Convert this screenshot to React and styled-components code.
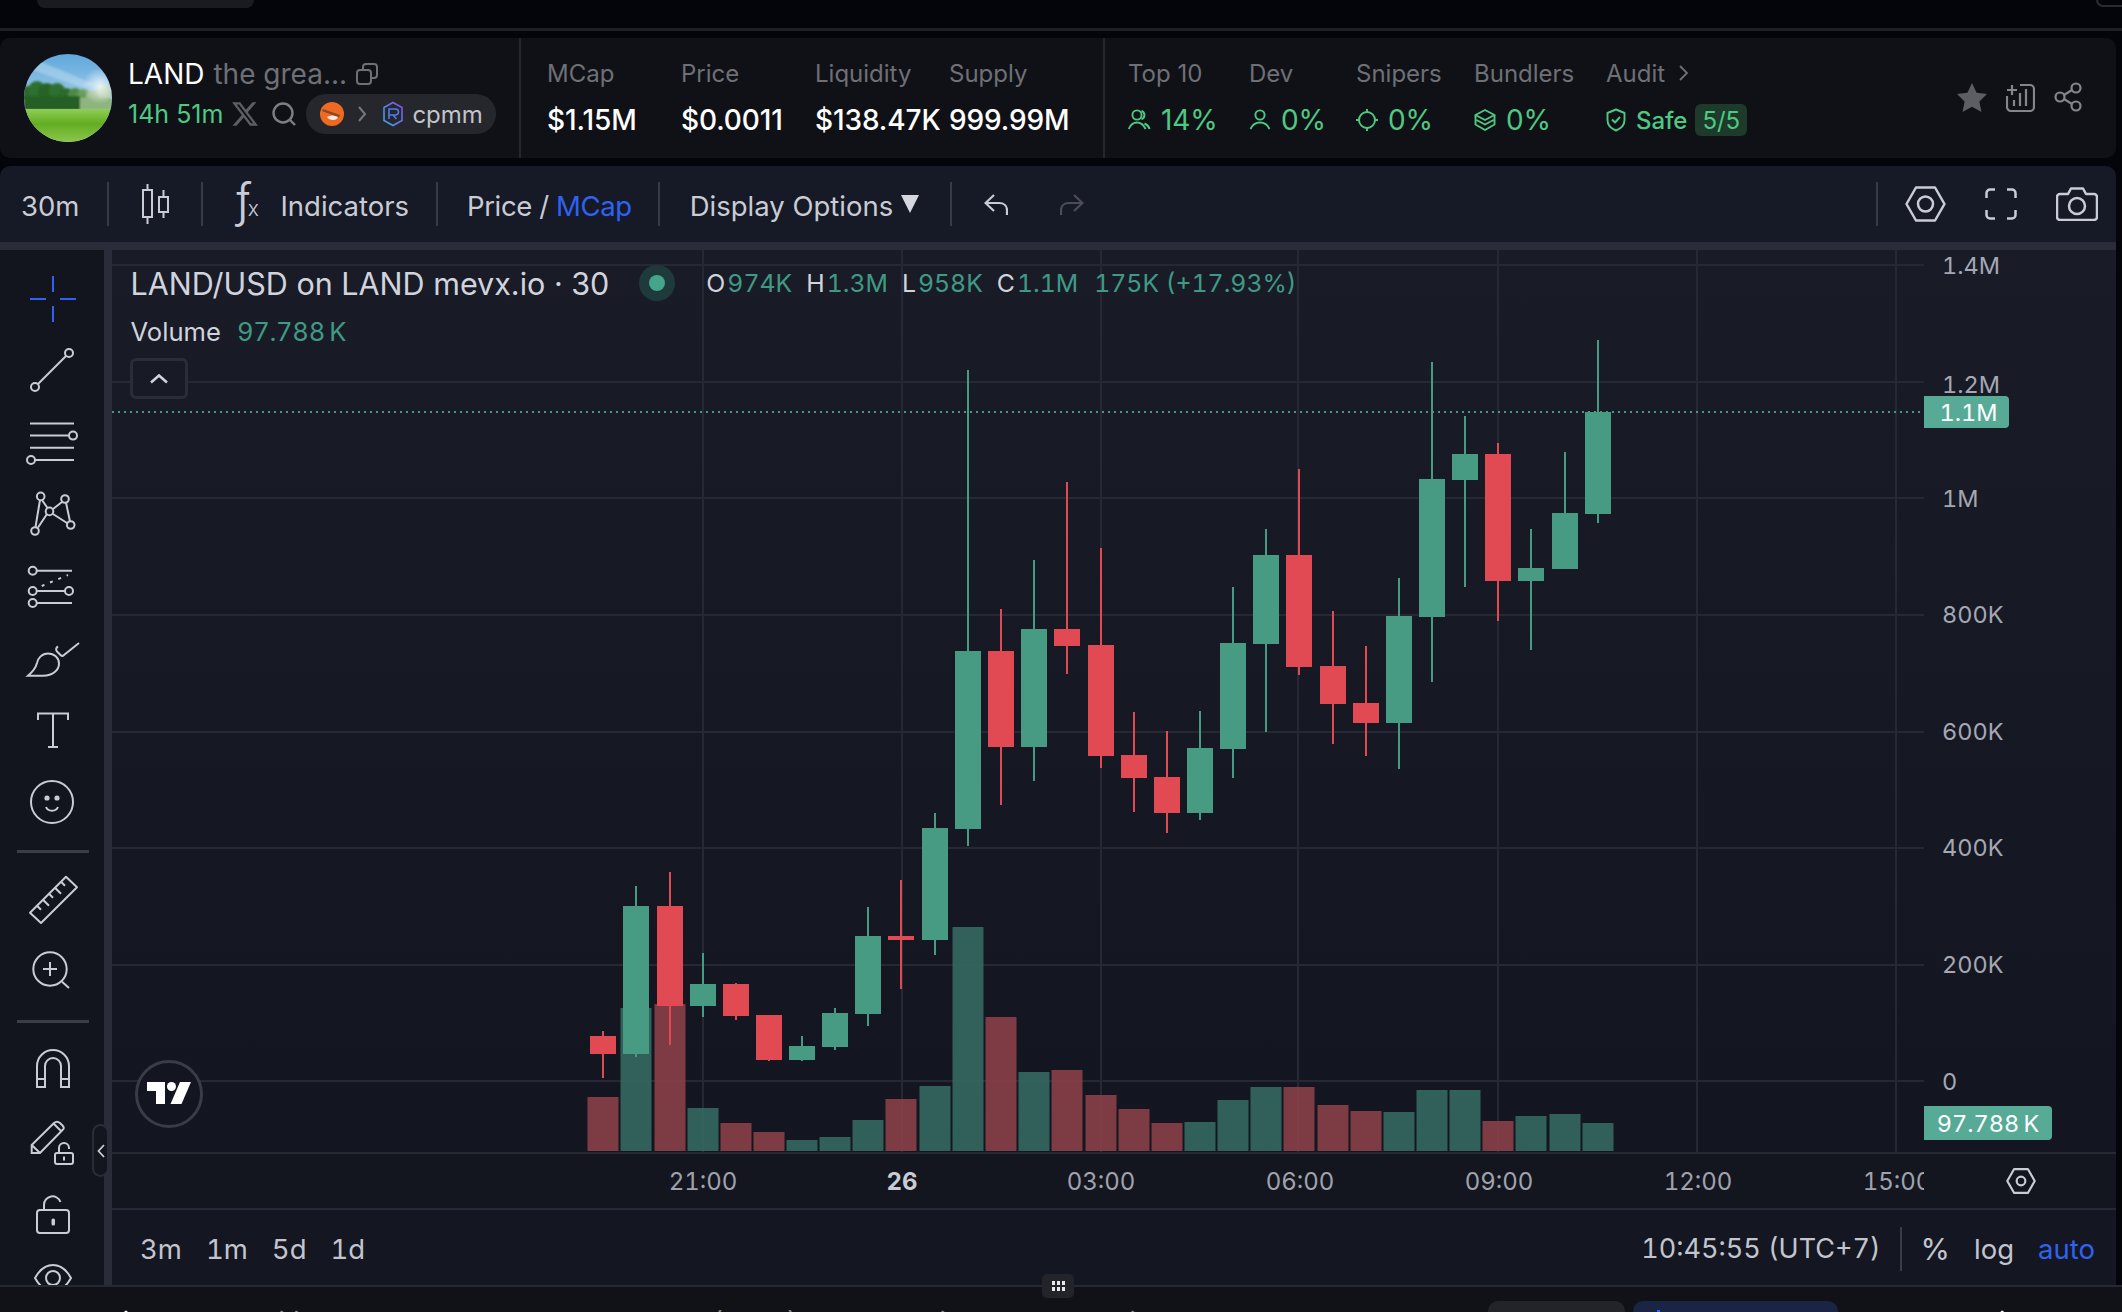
import React from 'react';
import styled, { createGlobalStyle } from 'styled-components';

const GlobalStyle = createGlobalStyle`
  html, body {
    margin: 0;
    width: 2122px;
    height: 1312px;
    overflow: hidden;
    background: #04050b;
    font-family: Inter, "Liberation Sans", sans-serif;
  }
  * { box-sizing: border-box; }
`;

const Page = styled.div`
  width: 2122px;
  height: 1312px;
  overflow: hidden;
  display: flex;
  flex-direction: column;
`;

const TopStrip = styled.div`
  height: 31px;
  flex: none;
  border-bottom: 3px solid #1d1f26;
  display: flex;
  justify-content: space-between;
  align-items: flex-start;
`;
const TopTab = styled.div`
  width: 217px;
  height: 8px;
  margin-left: 37px;
  background: #1a1b20;
  border-radius: 0 0 8px 8px;
`;
const TopCorner = styled.div`
  width: 26px;
  height: 7px;
  border-left: 2px solid #2a2b30;
  border-bottom: 2px solid #2a2b30;
  border-bottom-left-radius: 8px;
`;

const Header = styled.header`
  flex: none;
  width: 2116px;
  height: 120px;
  margin-top: 7px;
  background: #101116;
  border-radius: 10px;
  display: flex;
`;
const TokenBlock = styled.div`
  width: 521px;
  flex: none;
  padding-left: 24px;
  display: flex;
  align-items: center;
  gap: 16px;
  border-right: 2px solid #26272c;
`;
const Avatar = styled.div`
  width: 88px;
  height: 88px;
  border-radius: 50%;
  overflow: hidden;
  flex: none;
  svg { display: block; }
`;
const TokenInfo = styled.div`
  display: flex;
  flex-direction: column;
  gap: 2px;
  padding-bottom: 6px;
`;
const TokenTitle = styled.div`
  display: flex;
  align-items: center;
  height: 36px;
  font-size: 28px;
  color: #fff;
  white-space: nowrap;
  span { color: #6e7076; margin-left: 9px; }
  svg { margin-left: 9px; }
`;
const TokenMeta = styled.div`
  display: flex;
  align-items: center;
  height: 40px;
`;
const Age = styled.span`
  font-size: 25px;
  color: #4ec983;
  white-space: nowrap;
  margin-right: 9px;
`;
const DexPill = styled.div`
  height: 40px;
  width: 190px;
  margin-left: 10px;
  padding-left: 14px;
  border-radius: 20px;
  background: #26272c;
  display: flex;
  align-items: center;
  font-size: 24px;
  color: #c2c4c9;
`;

const StatGroup = styled.div`
  display: flex;
  flex: none;
  height: 100%;
  padding-left: ${p => p.$pad}px;
  width: ${p => p.$w}px;
  border-right: ${p => (p.$line ? '2px solid #26272c' : 'none')};
`;
const Stat = styled.div`
  width: ${p => p.$w}px;
  flex: none;
  padding-top: 20px;
`;
const StatLabel = styled.div`
  height: 30px;
  display: flex;
  align-items: center;
  gap: 14px;
  font-size: 24px;
  color: #6e7076;
  white-space: nowrap;
`;
const StatValue = styled.div`
  height: 34px;
  margin-top: 15px;
  display: flex;
  align-items: center;
  gap: ${p => (p.$good ? 10 : 9)}px;
  font-size: 28px;
  letter-spacing: -0.1px;
  white-space: nowrap;
  color: ${p => (p.$good ? '#4ec983' : '#ffffff')};
  font-weight: ${p => (p.$good ? 400 : 500)};
`;
const SafeLabel = styled.span`
  font-size: 24px;
  font-weight: 500;
  color: #4ec983;
`;
const ScoreBadge = styled.span`
  height: 32px;
  width: 52px;
  margin-left: -2px;
  border-radius: 6px;
  background: #1d3a2b;
  color: #4ec983;
  font-size: 24px;
  display: flex;
  align-items: center;
  justify-content: center;
`;
const HeaderActions = styled.div`
  margin-left: auto;
  padding: 0 34px 2px 0;
  display: flex;
  align-items: center;
  gap: 19px;
  color: #85868b;
`;

const Toolbar = styled.div`
  flex: none;
  width: 2116px;
  height: 84px;
  margin-top: 8px;
  padding-bottom: 8px;
  background: linear-gradient(#2a2d39, #2a2d39) bottom / 100% 8px no-repeat, #161926;
  border-radius: 10px 10px 0 0;
  display: flex;
  align-items: center;
  font-size: 27.5px;
  color: #c9ccd4;
`;
const ToolSection = styled.div`
  display: flex;
  align-items: center;
  white-space: nowrap;
  padding: 0 ${p => p.$r}px 0 ${p => p.$l}px;
  gap: ${p => p.$gap || 0}px;
`;
const ToolText = styled.span`
  padding-top: 3px;
  letter-spacing: ${p => (p.$tight ? '-0.4px' : '0')};
`;
const ToolSep = styled.div`
  width: 2px;
  height: 44px;
  background: #383b47;
  flex: none;
  margin-left: ${p => (p.$auto ? 'auto' : '0')};
`;
const Blue = styled.span`
  color: #2f62f1;
`;
const FxMark = styled.span`
  font-weight: 300;
  font-size: 48px;
  line-height: 40px;
  width: 27px;
  padding-bottom: 8px;
  display: flex;
  align-items: flex-end;
  white-space: nowrap;
  color: #c9ccd4;
  sub { font-size: 21px; vertical-align: baseline; line-height: 22px; margin-left: -4px; }
`;
const Triangle = styled.i`
  width: 0;
  height: 0;
  border-left: 9px solid transparent;
  border-right: 9px solid transparent;
  border-top: 18px solid #d5d7de;
`;

const ChartRow = styled.div`
  position: relative;
  flex: none;
  width: 2116px;
  height: 1035px;
  display: flex;
`;
const ToolRail = styled.aside`
  width: 112px;
  flex: none;
  height: 100%;
  padding: 13px 0 0 1px;
  background: #12141e;
  border-right: 8px solid #2a2d39;
  overflow: hidden;
  display: flex;
  flex-direction: column;
  align-items: center;
  color: #c9ccd4;
`;
const RailTool = styled.div`
  flex: none;
  height: ${p => p.$h}px;
  width: 100%;
  display: flex;
  align-items: center;
  justify-content: center;
`;
const RailDivider = styled.div`
  flex: none;
  width: 72px;
  height: 3px;
  background: #3a3c47;
  margin: ${p => p.$top}px 0 ${p => p.$bottom}px;
`;
const ToolIcon = styled.svg`
  width: 48px;
  height: 48px;
  overflow: visible;
  fill: none;
  stroke: currentColor;
  stroke-width: 2;
  color: ${p => (p.$active ? '#2f62f1' : 'inherit')};
`;
const CollapseHandle = styled.div`
  position: absolute;
  left: 92px;
  top: 874px;
  width: 17px;
  height: 53px;
  border: 2px solid #2a2d39;
  border-radius: 9px;
  background: #13151f;
  display: flex;
  align-items: center;
  justify-content: center;
`;
const DragHandle = styled.div`
  position: absolute;
  left: 1042px;
  top: 1024px;
  width: 32px;
  height: 24px;
  border-radius: 5px;
  background: #232429;
  display: grid;
  grid-template-columns: repeat(3, 3px);
  grid-auto-rows: 4px;
  gap: 2px;
  align-content: center;
  justify-content: center;
  i { background: #e8e9ec; }
`;

const ChartMain = styled.main`
  flex: 1;
  min-width: 0;
  display: flex;
  flex-direction: column;
  font-variant-numeric: tabular-nums;
`;
const ChartPane = styled.div`
  flex: none;
  height: 902px;
  display: flex;
`;
const Canvas = styled.div`
  position: relative;
  width: 1812px;
  flex: none;
  background: linear-gradient(#191c27, #131620);
`;
const ChartSvg = styled.svg`
  position: absolute;
  left: 0;
  top: 0;
  width: 1812px;
  height: 902px;
  display: block;
`;
const Legend = styled.div`
  position: absolute;
  left: 18.5px;
  top: 14px;
  display: flex;
  flex-direction: column;
  align-items: flex-start;
`;
const LegendTitle = styled.div`
  display: flex;
  align-items: center;
  height: 38px;
  white-space: nowrap;
  font-size: 30.5px;
  font-variant-numeric: normal;
  color: #d1d4dc;
`;
const StatusDot = styled.div`
  width: 36px;
  height: 36px;
  margin-left: 30px;
  border-radius: 50%;
  background: #1f3a3a;
  display: flex;
  align-items: center;
  justify-content: center;
  &::after {
    content: '';
    width: 16px;
    height: 16px;
    border-radius: 50%;
    background: #44a58c;
  }
`;
const Ohlc = styled.div`
  display: flex;
  margin-left: 31px;
  font-size: 24.8px;
  font-variant-numeric: tabular-nums;
  gap: 14px;
  color: #d1d4dc;
  b { font-weight: 400; color: #3f9a85; margin-left: 2px; }
`;
const LegendVolume = styled.div`
  display: flex;
  align-items: center;
  height: 38px;
  margin-top: 10px;
  gap: 16px;
  font-size: 25.6px;
  color: #d1d4dc;
  b { font-weight: 400; color: #3f9a85; letter-spacing: -0.3px; }
`;
const CollapseLegend = styled.div`
  width: 58px;
  height: 41px;
  margin-top: 8px;
  margin-left: -1px;
  border: 3px solid #2a2d39;
  border-radius: 6px;
  background: #181b26;
  display: flex;
  align-items: center;
  justify-content: center;
  color: #d1d4dc;
`;
const Watermark = styled.div`
  position: absolute;
  left: 23px;
  top: 810px;
  width: 68px;
  height: 68px;
  border-radius: 50%;
  border: 3px solid #3a3c47;
  background: #131620;
  display: flex;
  align-items: center;
  justify-content: center;
`;

const PriceScale = styled.div`
  position: relative;
  flex: 1;
  background: linear-gradient(#191c27, #131620);
  display: flex;
  flex-direction: column;
  gap: 86.6px;
  padding-left: 18px;
`;
const PriceLabel = styled.div`
  height: 30px;
  display: flex;
  align-items: center;
  font-size: 23.5px;
  color: #a5a8b3;
  &:nth-child(2) { margin: 3px 0 -3px; }
`;
const PriceTag = styled.div`
  position: absolute;
  left: 0;
  top: ${p => p.$top}px;
  width: ${p => p.$w}px;
  height: ${p => p.$h}px;
  padding-left: ${p => p.$pad || 0}px;
  background: #57ab96;
  color: #fff;
  font-size: 23.5px;
  border-radius: 0 4px 4px 0;
  display: flex;
  align-items: center;
  justify-content: center;
  white-space: nowrap;
`;

const TimeAxis = styled.div`
  flex: none;
  height: 56px;
  display: flex;
  background: #14161f;
  border-top: 2px solid #262933;
`;
const TimeScale = styled.div`
  width: 1812px;
  flex: none;
  overflow: hidden;
  display: flex;
  align-items: center;
  padding-left: 491.5px;
`;
const TimeLabel = styled.div`
  width: 199px;
  flex: none;
  text-align: center;
  font-size: 24px;
  color: ${p => (p.$bold ? '#c9ccd4' : '#a0a3ad')};
  font-weight: ${p => (p.$bold ? 700 : 400)};
`;
const AxisCorner = styled.div`
  flex: 1;
  display: flex;
  align-items: center;
  justify-content: center;
  padding-left: 2px;
  color: #c9ccd4;
`;

const RangeBar = styled.div`
  flex: 1;
  display: flex;
  align-items: center;
  padding: 2px 21px 0 28px;
  background: #141621;
  border-top: 2px solid #262933;
  font-size: 27.5px;
  color: #c2c5ce;
  white-space: nowrap;
`;
const RangeItem = styled.span`
  margin-right: 24px;
`;
const RangeRight = styled.div`
  margin-left: auto;
  display: flex;
  align-items: center;
  gap: 24px;
`;
const ClockText = styled.span`
  font-size: 27px;
  margin-right: -10px;
`;
const PercentText = styled.span`
  font-size: 30px;
`;
const RangeSep = styled.div`
  width: 2px;
  height: 44px;
  margin: 0 -5px 0 5px;
  background: #3a3c47;
`;

const Footer = styled.footer`
  flex: 1;
  width: 2122px;
  min-height: 0;
  overflow: hidden;
  border-top: 2px solid #262933;
  background: #111217;
  display: flex;
  align-items: flex-start;
  padding: 20px 0 0 16px;
`;
const FooterTab = styled.span`
  margin-right: 59px;
  font-size: 26px;
  line-height: 30px;
  white-space: nowrap;
  flex: none;
  color: ${p => (p.$on ? '#fff' : '#85868b')};
`;
const FooterRight = styled.div`
  margin-left: auto;
  width: 634px;
  flex: none;
  display: flex;
  align-items: flex-start;
  gap: 8px;
`;
const FooterPill = styled.div`
  flex: none;
  width: ${p => p.$w}px;
  height: 40px;
  margin-top: -6px;
  padding: 9px 0 0 24px;
  border-radius: 10px;
  background: ${p => (p.$blue ? '#1a2545' : '#232429')};
  &::before {
    content: '';
    display: ${p => (p.$blue ? 'block' : 'none')};
    width: 3px;
    height: 4px;
    background: #2f62f1;
  }
`;
const FooterAside = styled(FooterTab)`
  margin: 0 0 0 14px;
`;

const candles = [
  [603, 1036, 1054, 1031, 1078, 0, 1097],
  [636, 906, 1054, 886, 1057, 1, 1008],
  [670, 906, 1006, 872, 1045, 0, 1004],
  [703, 984, 1006, 953, 1017, 1, 1108],
  [736, 984, 1016, 983, 1020, 0, 1123],
  [769, 1015, 1060, 1015, 1061, 0, 1132],
  [802, 1046, 1060, 1036, 1061, 1, 1140],
  [835, 1013, 1047, 1008, 1050, 1, 1137],
  [868, 936, 1014, 907, 1026, 1, 1120],
  [901, 936, 940, 880, 989, 0, 1099],
  [935, 828, 940, 813, 955, 1, 1086],
  [968, 651, 829, 370, 846, 1, 927],
  [1001, 651, 747, 609, 805, 0, 1017],
  [1034, 629, 747, 560, 781, 1, 1072],
  [1067, 629, 646, 482, 674, 0, 1070],
  [1101, 645, 756, 548, 768, 0, 1095],
  [1134, 755, 778, 712, 812, 0, 1109],
  [1167, 777, 813, 731, 833, 0, 1123],
  [1200, 748, 813, 711, 820, 1, 1122],
  [1233, 643, 749, 587, 778, 1, 1100],
  [1266, 555, 644, 529, 732, 1, 1087],
  [1299, 555, 667, 469, 675, 0, 1087],
  [1333, 666, 704, 611, 744, 0, 1105],
  [1366, 703, 723, 646, 756, 0, 1111],
  [1399, 616, 723, 578, 769, 1, 1112],
  [1432, 479, 617, 362, 682, 1, 1090],
  [1465, 454, 480, 416, 587, 1, 1090],
  [1498, 454, 581, 443, 621, 0, 1121],
  [1531, 568, 581, 529, 650, 1, 1116],
  [1565, 513, 569, 452, 569, 1, 1114],
  [1598, 412, 514, 340, 523, 1, 1123],
];
const gridY = [265, 382, 498, 615, 732, 848, 965, 1081];
const gridX = [703, 902, 1101, 1298, 1498, 1697, 1896];
const prices = ['1.4M', '1.2M', '1M', '800K', '600K', '400K', '200K', '0'];
const times = ['21:00', '26', '03:00', '06:00', '09:00', '12:00', '15:00'];
const UP = '#469b82';
const DOWN = '#e14a53';

const CandleChart = () => (
  <ChartSvg viewBox="112 250 1812 902">
    {gridY.map(y => <rect key={y} x="112" y={y - 1} width="1812" height="2" fill="#262933" />)}
    {gridX.map(x => <rect key={x} x={x - 1} y="250" width="2" height="902" fill="#262933" />)}
    {candles.map(([x, , , , , up, vol]) => (
      <rect key={x} x={x - 15.5} y={vol} width="31" height={1151 - vol} fill={up ? '#356860' : '#8a3f47'} opacity="0.9" />
    ))}
    <line x1="112" x2="1924" y1="412" y2="412" stroke={UP} strokeWidth="2" strokeDasharray="2 4" />
    {candles.map(([x, top, bottom, wickTop, wickBottom, up]) => (
      <g key={x} fill={up ? UP : DOWN}>
        <rect x={x - 1} y={wickTop} width="2" height={wickBottom - wickTop} />
        <rect x={x - 13} y={top} width="26" height={bottom - top} />
      </g>
    ))}
  </ChartSvg>
);

const HexGear = ({ w = 41, h = 36, r = 7.5, sw = 2.5 }) => (
  <svg width={w} height={h} viewBox="0 0 41 36" fill="none" stroke="currentColor" strokeWidth={sw} strokeLinejoin="round">
    <path d="M1.5 18 11 1.5h19L39.5 18 30 34.5H11Z" />
    <circle cx="20.5" cy="18" r={r} />
  </svg>
);

const railTools = [
  { h: 71.5, active: true, d: <path d="M24 1v16M24 31v16M1 24h16M31 24h16" /> },
  { h: 71, d: <><path d="M9 38 37 10" /><circle cx="40" cy="7" r="4" /><circle cx="6" cy="41" r="4" /></> },
  { h: 72, d: <><path d="M1 5.5h44M1 17.6h39M1 29.8h44M6 42h39" /><circle cx="44" cy="17.6" r="4" /><circle cx="2" cy="42" r="4" /></> },
  { h: 72.5, d: <><path d="M11 10 6.5 37M13 10l5.5 8M9 37.5 18 24M24 19l9-7M37 12.5l4 19M24 24l14 9" /><circle cx="11.7" cy="6.4" r="3.8" /><circle cx="36" cy="9" r="3.8" /><circle cx="20.5" cy="21.4" r="3.8" /><circle cx="41.7" cy="35" r="3.8" /><circle cx="6" cy="41" r="3.8" /></> },
  { h: 72.5, d: <><path d="M8 8.7h35M8 29h28M8 41h35" /><path d="M12.7 24 39 13" strokeDasharray="3 6" /><circle cx="3.7" cy="8.7" r="4" /><circle cx="3.7" cy="29" r="4" /><circle cx="40" cy="29" r="4" /><circle cx="3.7" cy="41" r="4" /></> },
  { h: 72, d: <><path d="M-1 40.7H14C24 40.7 30 35 30 28.5 30 22.5 25 18.5 19 18.5 13 18.5 9 23 8 28 7 32 4 36.5-1 40.7Z" /><path d="M29 11.5c-2 1-2.5 3.5-1 5l3.5 3.5c1 1 2.5 1 3.5 0L50 8" /></> },
  { h: 71.5, d: <path d="M9 14V7.5h30V14M24 7.5V41M19 41h10" /> },
  { h: 72, d: <><circle cx="23" cy="24" r="21" /><circle cx="18" cy="20" r="1.6" fill="currentColor" /><circle cx="28" cy="20" r="1.6" fill="currentColor" /><path d="M17 29c2 5 10 5 12 0" /></> },
];
const railMeasure = [
  { h: 72, d: <><path d="M1 36.7 37 .7 48 11.3 12 47Z" strokeLinejoin="round" /><path d="M8 29.7l4 4M14 23.7l6 6M20 17.7l4 4M26 11.7l6 6M32 5.7l4 4" /></> },
  { h: 68, d: <><circle cx="21" cy="23" r="16.7" /><path d="M21 16v14M14 23h14M33 35.7l7 6.3" /></> },
];
const railLocks = [
  { h: 76, d: <path d="M8 43V22a16 16 0 0 1 32 0V43H32V22a8 8 0 0 0-16 0V43ZM8 35h8M32 35h8" /> },
  { h: 74, d: <><path d="M2.7 26 25 4q3-2.5 6 0l2.500 2.500q2.500 2.500 0 4.500L11 34H2.700ZM2.700 26 11 34M25 5l7 7" /><rect x="26" y="34" width="18" height="11" rx="2" /><path d="M30 34v-5a5 5 0 0 1 10 0v1" /><rect x="34" y="37.5" width="2" height="4" fill="currentColor" stroke="none" /></> },
  { h: 70, d: <><rect x="8" y="19" width="32" height="23" rx="3" /><path d="M15 19v-5a8.500 8.500 0 0 1 16.500-3" /><rect x="22.500" y="27.500" width="3.500" height="7" rx="1.500" fill="currentColor" stroke="none" /></> },
  { h: 56, d: <><path d="M6 24C11 15 17 11 24 11s13 4 18 13c-5 9-11 13-18 13S11 33 6 24Z" /><circle cx="24" cy="24" r="7" /></> },
];

const renderTools = list => list.map((t, i) => (
  <RailTool key={i} $h={t.h}>
    <ToolIcon viewBox="0 0 48 48" $active={t.active}>{t.d}</ToolIcon>
  </RailTool>
));

const treeBlobs = [
  [4, 40, 8, '#2c6a2e'], [13, 36, 9, '#2f6f30'], [23, 38, 9, '#276428'], [33, 37, 8, '#2f7030'],
  [42, 42, 8, '#2e6b2c'], [51, 41, 7, '#4d8a45'], [60, 42, 7, '#6a9d5c'], [69, 43, 7, '#93b885'],
  [80, 38, 7, '#a9c69c'],
];

const AvatarArt = () => (
  <svg width="88" height="88" viewBox="0 0 88 88">
    <defs>
      <linearGradient id="sky" x1="0" y1="0" x2="0" y2="1">
        <stop offset="0" stopColor="#5fa8dc" />
        <stop offset="1" stopColor="#d5e9f2" />
      </linearGradient>
      <linearGradient id="grass" x1="0" y1="0" x2="0" y2="1">
        <stop offset="0" stopColor="#8fce55" />
        <stop offset="0.45" stopColor="#63ad22" />
        <stop offset="1" stopColor="#8bc64c" />
      </linearGradient>
      <radialGradient id="sun" cx="0.5" cy="0.5" r="0.5">
        <stop offset="0" stopColor="#ffffff" stopOpacity="0.8" />
        <stop offset="1" stopColor="#ffffff" stopOpacity="0" />
      </radialGradient>
      <filter id="soft"><feGaussianBlur stdDeviation="1" /></filter>
    </defs>
    <rect width="88" height="88" fill="url(#sky)" />
    <path d="M8 4 70 30 60 34 2 14Z" fill="#fff" opacity="0.25" filter="url(#soft)" />
    <g filter="url(#soft)">
      {treeBlobs.map(([cx, cy, r, c]) => <circle key={cx} cx={cx} cy={cy} r={r} fill={c} />)}
      <rect y="42" width="56" height="14" fill="#285f28" />
      <rect x="56" y="44" width="32" height="12" fill="#8fb57e" />
    </g>
    <circle cx="76" cy="32" r="18" fill="url(#sun)" />
    <rect y="55" width="88" height="33" fill="url(#grass)" />
  </svg>
);

const CopyIcon = () => (
  <svg width="22" height="22" viewBox="0 0 22 22" fill="none" stroke="#6e7076" strokeWidth="2">
    <rect x="1" y="7" width="14" height="14" rx="3" />
    <path d="M7 7V4a3 3 0 0 1 3-3h8a3 3 0 0 1 3 3v8a3 3 0 0 1-3 3h-3" />
  </svg>
);
const XMark = () => (
  <svg width="26" height="26" viewBox="0 0 24 24" fill="#5d5e63">
    <path d="M18.901 1.153h3.68l-8.04 9.19L24 22.846h-7.406l-5.8-7.584-6.638 7.584H.474l8.6-9.83L0 1.154h7.594l5.243 6.932ZM17.61 20.644h2.039L6.486 3.24H4.298Z" />
  </svg>
);
const SearchMark = () => (
  <svg width="24" height="24" viewBox="0 0 24 24" fill="none" stroke="#7d7e83" strokeWidth="2.4" style={{ marginLeft: 14 }}>
    <circle cx="11" cy="11" r="9.5" />
    <path d="m18 18 5 5" />
  </svg>
);
const FoxMark = () => (
  <svg width="24" height="24" viewBox="0 0 24 24">
    <circle cx="12" cy="12" r="12" fill="#ee6a23" />
    <path d="M3 7 20 13l-1 2.500L2 9Z" fill="#8a4a25" />
    <path d="M7 15q5-3 11 0-1 3-5 3t-6-3Z" fill="#f5ede2" />
  </svg>
);
const ChevronSmall = () => (
  <svg width="10" height="16" viewBox="0 0 10 16" fill="none" stroke="#77787d" strokeWidth="2" style={{ margin: '0 15px 0 13px' }}>
    <path d="m2 1 6 7-6 7" />
  </svg>
);
const RaydiumMark = () => (
  <svg width="22" height="26" viewBox="0 0 22 26" fill="none" strokeWidth="1.6" style={{ marginRight: 8 }}>
    <defs>
      <linearGradient id="ray" x1="0" y1="1" x2="1" y2="0">
        <stop offset="0" stopColor="#38a8e8" />
        <stop offset="1" stopColor="#8a4be8" />
      </linearGradient>
    </defs>
    <path d="M11 1.500 20 6.500v13L11 24.500 2 19.500v-13Z" stroke="url(#ray)" />
    <path d="M7 18V8h6.500a2.500 2.500 0 0 1 0 6H7M11 14l3.500 4" stroke="#4f7cf0" />
  </svg>
);
const UsersMark = () => (
  <svg width="23" height="22" viewBox="0 0 23 22" fill="none" stroke="#4ec983" strokeWidth="1.9">
    <circle cx="9" cy="6" r="4.6" />
    <path d="M.8 20C2.500 15.500 5.500 13.500 9 13.500s6.500 2 8.500 6.500M13.500 1.800a4.600 4.600 0 0 1 0 8.600M16.500 14.500c2.500 1 4.200 3 5.200 5.500" />
  </svg>
);
const UserMark = () => (
  <svg width="22" height="22" viewBox="0 0 22 22" fill="none" stroke="#4ec983" strokeWidth="1.9">
    <circle cx="11" cy="6" r="4.600" />
    <path d="M1.500 20C3.500 15.500 7 13.500 11 13.500s7.500 2 9.500 6.500" />
  </svg>
);
const TargetMark = () => (
  <svg width="22" height="22" viewBox="0 0 22 22" fill="none" stroke="#4ec983" strokeWidth="1.9">
    <circle cx="11" cy="11" r="8" />
    <path d="M11 0v3M11 19v3M0 11h3M19 11h3" />
  </svg>
);
const LayersMark = () => (
  <svg width="22" height="22" viewBox="0 0 22 22" fill="none" stroke="#4ec983" strokeWidth="1.9" strokeLinejoin="round">
    <path d="M11 1 20.500 6 11 11 1.500 6Z" />
    <path d="M1.500 6v4.500L11 15.500l9.500-5V6" />
    <path d="M1.500 11v4.500L11 21l9.500-5.500V11" />
  </svg>
);
const ShieldMark = () => (
  <svg width="20" height="24" viewBox="0 0 20 24" fill="none" stroke="#4ec983" strokeWidth="1.9" strokeLinejoin="round">
    <path d="M10 1.500 18.500 5v7c0 5-3.500 8.500-8.500 10.500C5 20.500 1.500 17 1.500 12V5Z" />
    <path d="m6 11.500 3 3 5-5.500" />
  </svg>
);
const RowChevron = () => (
  <svg width="9" height="16" viewBox="0 0 9 16" fill="none" stroke="#6e7076" strokeWidth="1.8">
    <path d="m1 1 7 7-7 7" />
  </svg>
);
const StarMark = () => (
  <svg width="30" height="29" viewBox="0 0 30 29" fill="#5d5e63">
    <path d="M15 0l4.600 9.800 10.400 1.300-7.600 7.300L24.400 29 15 23.800 5.600 29l2-10.600L0 11.100l10.400-1.300Z" />
  </svg>
);
const AddChartMark = () => (
  <svg width="29" height="30" viewBox="0 0 29 30" fill="none" stroke="currentColor" strokeWidth="2.200">
    <path d="M1 8h10M6 3v10" />
    <path d="M14 3h10a4 4 0 0 1 4 4v18a4 4 0 0 1-4 4H5a4 4 0 0 1-4-4V14" />
    <path d="M8 24v-6M14 24V11M20 24V7" />
  </svg>
);
const ShareMark = () => (
  <svg width="28" height="30" viewBox="0 0 28 30" fill="none" stroke="currentColor" strokeWidth="2.200">
    <circle cx="22" cy="6" r="4.500" />
    <circle cx="6" cy="15" r="4.500" />
    <circle cx="22" cy="24" r="4.500" />
    <path d="m10 13 8-5M10 17l8 5" />
  </svg>
);
const CandlesMark = () => (
  <svg width="27" height="40" viewBox="0 0 27 40" fill="none" stroke="#c9ccd4" strokeWidth="2">
    <rect x="1" y="6" width="9" height="27" />
    <path d="M5.500 0v6M5.500 33v7" />
    <rect x="17" y="13" width="9" height="15" />
    <path d="M21.500 6v7M21.500 28v6" />
  </svg>
);
const UndoMark = ({ dim, flip }) => (
  <svg width="24" height="21" viewBox="0 0 24 21" fill="none" stroke={dim ? '#4b4e5a' : '#c9ccd4'} strokeWidth="2.200" style={flip ? { transform: 'scaleX(-1)' } : undefined}>
    <path d="M10 1 1.500 9 10 17M1.500 9H15c5 0 8 3 8 7v5" />
  </svg>
);
const FullscreenMark = () => (
  <svg width="32" height="32" viewBox="0 0 32 32" fill="none" stroke="#c9ccd4" strokeWidth="2.500">
    <path d="M1.500 10V5A3.500 3.500 0 0 1 5 1.500h5M22 1.500h5A3.500 3.500 0 0 1 30.500 5v5M30.500 22v5a3.500 3.500 0 0 1-3.500 3.500h-5M10 30.500H5A3.500 3.500 0 0 1 1.500 27v-5" />
  </svg>
);
const CameraMark = () => (
  <svg width="42" height="34" viewBox="0 0 42 34" fill="none" stroke="#c9ccd4" strokeWidth="2.500" strokeLinejoin="round">
    <path d="M4 7h8l3-5.500h12L30 7h8a3 3 0 0 1 3 3v20a3 3 0 0 1-3 3H4a3 3 0 0 1-3-3V10a3 3 0 0 1 3-3Z" />
    <circle cx="21" cy="19" r="8" />
  </svg>
);
const TvLogo = () => (
  <svg width="44" height="24" viewBox="0 0 44 24" fill="#fff">
    <path d="M0 0h18v22H9V9H0Z" />
    <circle cx="24.500" cy="4.500" r="4.500" />
    <path d="M33 0h11l-9.500 22H23.500Z" />
  </svg>
);

const App = () => (
  <Page>
    <GlobalStyle />
    <TopStrip>
      <TopTab />
      <TopCorner />
    </TopStrip>

    <Header>
      <TokenBlock>
        <Avatar><AvatarArt /></Avatar>
        <TokenInfo>
          <TokenTitle>LAND<span>the grea...</span><CopyIcon /></TokenTitle>
          <TokenMeta>
            <Age>14h 51m</Age>
            <XMark />
            <SearchMark />
            <DexPill>
              <FoxMark />
              <ChevronSmall />
              <RaydiumMark />
              cpmm
            </DexPill>
          </TokenMeta>
        </TokenInfo>
      </TokenBlock>

      <StatGroup $pad={26} $w={584} $line>
        <Stat $w={134}><StatLabel>MCap</StatLabel><StatValue>$1.15M</StatValue></Stat>
        <Stat $w={134}><StatLabel>Price</StatLabel><StatValue>$0.0011</StatValue></Stat>
        <Stat $w={134}><StatLabel>Liquidity</StatLabel><StatValue>$138.47K</StatValue></Stat>
        <Stat $w={134}><StatLabel>Supply</StatLabel><StatValue>999.99M</StatValue></Stat>
      </StatGroup>

      <StatGroup $pad={23} $w={700}>
        <Stat $w={121}><StatLabel>Top 10</StatLabel><StatValue $good><UsersMark />14%</StatValue></Stat>
        <Stat $w={107}><StatLabel>Dev</StatLabel><StatValue $good><UserMark />0%</StatValue></Stat>
        <Stat $w={118}><StatLabel>Snipers</StatLabel><StatValue $good><TargetMark />0%</StatValue></Stat>
        <Stat $w={132}><StatLabel>Bundlers</StatLabel><StatValue $good><LayersMark />0%</StatValue></Stat>
        <Stat $w={160}>
          <StatLabel>Audit <RowChevron /></StatLabel>
          <StatValue $good><ShieldMark /><SafeLabel>Safe</SafeLabel><ScoreBadge>5/5</ScoreBadge></StatValue>
        </Stat>
      </StatGroup>

      <HeaderActions>
        <StarMark />
        <AddChartMark />
        <ShareMark />
      </HeaderActions>
    </Header>

    <Toolbar>
      <ToolSection $l={21} $r={28}><ToolText>30m</ToolText></ToolSection>
      <ToolSep />
      <ToolSection $l={33} $r={32}><CandlesMark /></ToolSection>
      <ToolSep />
      <ToolSection $l={31} $r={27} $gap={19}><FxMark>ƒ<sub>x</sub></FxMark><ToolText>Indicators</ToolText></ToolSection>
      <ToolSep />
      <ToolSection $l={29} $r={26}><ToolText $tight>Price / <Blue>MCap</Blue></ToolText></ToolSection>
      <ToolSep />
      <ToolSection $l={30} $r={31} $gap={8}><ToolText>Display Options</ToolText><Triangle /></ToolSection>
      <ToolSep />
      <ToolSection $l={32} $r={0} $gap={52}><UndoMark /><UndoMark dim flip /></ToolSection>
      <ToolSep $auto />
      <ToolSection $l={27} $r={18} $gap={39}>
        <HexGear />
        <FullscreenMark />
        <CameraMark />
      </ToolSection>
    </Toolbar>

    <ChartRow>
      <ToolRail>
        {renderTools(railTools)}
        <RailDivider $top={12} $bottom={11} />
        {renderTools(railMeasure)}
        <RailDivider $top={16} $bottom={7} />
        {renderTools(railLocks)}
      </ToolRail>

      <ChartMain>
        <ChartPane>
          <Canvas>
            <CandleChart />
            <Legend>
              <LegendTitle>
                LAND/USD on LAND mevx.io · 30
                <StatusDot />
                <Ohlc>
                  <span>O<b>974K</b></span>
                  <span>H<b>1.3M</b></span>
                  <span>L<b>958K</b></span>
                  <span>C<b>1.1M</b></span>
                  <span><b>175K (+17.93%)</b></span>
                </Ohlc>
              </LegendTitle>
              <LegendVolume>Volume <b>97.788{'\u2009'}K</b></LegendVolume>
              <CollapseLegend>
                <svg width="18" height="11" viewBox="0 0 18 11" fill="none" stroke="currentColor" strokeWidth="2.500">
                  <path d="m1 9.500 8-7 8 7" />
                </svg>
              </CollapseLegend>
            </Legend>
            <Watermark><TvLogo /></Watermark>
          </Canvas>
          <PriceScale>
            {prices.map(p => <PriceLabel key={p}>{p}</PriceLabel>)}
            <PriceTag $top={146} $w={85} $h={32} $pad={4}>1.1M</PriceTag>
            <PriceTag $top={856} $w={128} $h={34}>97.788{'\u2009'}K</PriceTag>
          </PriceScale>
        </ChartPane>

        <TimeAxis>
          <TimeScale>
            {times.map(t => <TimeLabel key={t} $bold={t === '26'}>{t}</TimeLabel>)}
          </TimeScale>
          <AxisCorner><HexGear w={30} h={26} r={6} sw={3} /></AxisCorner>
        </TimeAxis>

        <RangeBar>
          <RangeItem>3m</RangeItem>
          <RangeItem>1m</RangeItem>
          <RangeItem>5d</RangeItem>
          <RangeItem>1d</RangeItem>
          <RangeRight>
            <ClockText>10:45:55 (UTC+7)</ClockText>
            <RangeSep />
            <PercentText>%</PercentText>
            <span>log</span>
            <Blue>auto</Blue>
          </RangeRight>
        </RangeBar>
      </ChartMain>

      <CollapseHandle>
        <svg width="8" height="14" viewBox="0 0 8 14" fill="none" stroke="#c9ccd4" strokeWidth="1.800">
          <path d="M7 1 1.500 7 7 13" />
        </svg>
      </CollapseHandle>
      <DragHandle>
        <i /><i /><i /><i /><i /><i />
      </DragHandle>
    </ChartRow>

    <Footer>
      <FooterTab $on>Transactions</FooterTab>
      <FooterTab>Positions</FooterTab>
      <FooterTab>Top Traders</FooterTab>
      <FooterTab>Holders (0.0%)</FooterTab>
      <FooterTab>Watchlist</FooterTab>
      <FooterTab>My Holdings</FooterTab>
      <FooterTab>Orders</FooterTab>
      <FooterRight>
        <FooterPill $w={137} />
        <FooterPill $w={205} $blue />
        <FooterAside $on>Token Details</FooterAside>
      </FooterRight>
    </Footer>
  </Page>
);

export default App;
